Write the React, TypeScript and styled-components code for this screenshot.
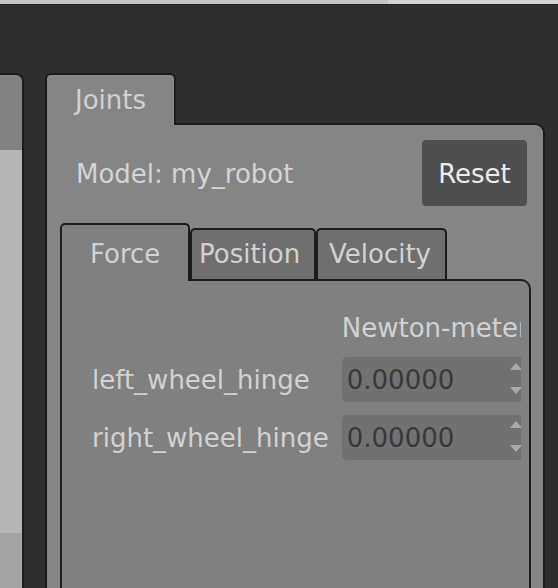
import React from 'react';
import styled, { createGlobalStyle } from 'styled-components';

const Global = createGlobalStyle`
  html, body { margin: 0; padding: 0; background: #2f2f2f; }
  body { width: 558px; height: 588px; overflow: hidden; font-family: "DejaVu Sans", sans-serif; }
  * { box-sizing: border-box; }
`;

const Screen = styled.div`
  width: 558px;
  height: 588px;
  display: flex;
  flex-direction: column;
  overflow: hidden;
  background: #2f2f2f;
`;

const TopStrip = styled.div`
  height: 5px;
  flex-shrink: 0;
  display: flex;
  border-bottom: 1px solid #222;
`;

const StripSeg = styled.div<{ $tone: string; $w?: number }>`
  background: ${(p) => p.$tone};
  ${(p) => (p.$w ? `width: ${p.$w}px;` : 'flex: 1;')}
`;

const Workspace = styled.div`
  flex: 1;
  min-height: 0;
  display: flex;
  gap: 21px;
  padding-top: 68px;
`;

const LeftPane = styled.div`
  width: 24px;
  flex-shrink: 0;
  display: flex;
  flex-direction: column;
  background: #818181;
  border: 2px solid #1c1c1c;
  border-left: none;
  border-bottom: none;
  border-top-right-radius: 8px;
  overflow: hidden;
`;

const LeftHead = styled.div`
  height: 75px;
  flex-shrink: 0;
`;

const LeftCanvas = styled.div`
  flex: 1;
  background: #b5b5b5;
`;

const LeftFooter = styled.div`
  height: 55px;
  flex-shrink: 0;
  background: #a3a3a3;
`;

const JointsPane = styled.div`
  width: 500px;
  flex-shrink: 0;
  display: flex;
  flex-direction: column;
`;

const TabRow = styled.div`
  display: flex;
  align-items: flex-end;
  margin-bottom: -2px;
  position: relative;
  z-index: 1;
`;

const OuterTab = styled.div`
  width: 131px;
  height: 52px;
  padding: 10px 0 0 28px;
  background: #858585;
  border: 2px solid #1c1c1c;
  border-bottom: none;
  border-radius: 6px 6px 0 0;
  color: #d2d2d2;
  font-size: 26px;
  line-height: 30px;
`;

const Panel = styled.div`
  flex: 1;
  min-height: 0;
  display: flex;
  flex-direction: column;
  background: #858585;
  border: 2px solid #1c1c1c;
  border-bottom: none;
  border-top-right-radius: 10px;
  padding: 15px 12px 0 13px;
`;

const Header = styled.div`
  display: flex;
  align-items: center;
  justify-content: space-between;
  padding: 0 4px 0 16px;
`;

const ModelLabel = styled.span`
  color: #d4d4d4;
  font-size: 26px;
  line-height: 30px;
  padding-top: 2px;
`;

const ResetButton = styled.button`
  width: 105px;
  height: 66px;
  border: none;
  border-radius: 4px;
  background: #4f4f4f;
  color: #ececec;
  font-family: "DejaVu Sans", sans-serif;
  font-size: 26px;
  line-height: 30px;
  padding: 2px 0 0;
`;

const SubTabRow = styled.div`
  display: flex;
  align-items: flex-end;
  margin-top: 17px;
  margin-bottom: -2px;
  position: relative;
  z-index: 1;
`;

const SubTab = styled.div<{ $active?: boolean; $w: number; $pad: number }>`
  width: ${(p) => p.$w}px;
  height: ${(p) => (p.$active ? 58 : 51)}px;
  margin-bottom: ${(p) => (p.$active ? 0 : 2)}px;
  padding-top: ${(p) => (p.$active ? 14 : 9)}px;
  padding-left: ${(p) => p.$pad}px;
  background: ${(p) => (p.$active ? '#808080' : '#6f6f6f')};
  border: 2px solid #1c1c1c;
  border-bottom: none;
  border-radius: 5px 5px 0 0;
  color: #d2d2d2;
  font-size: 26px;
  line-height: 30px;
  white-space: nowrap;
`;

const InnerPanel = styled.div`
  flex: 1;
  min-height: 0;
  background: #808080;
  border: 2px solid #1c1c1c;
  border-bottom: none;
  border-top-right-radius: 10px;
  display: flex;
  padding-right: 8px;
`;

const Viewport = styled.div`
  flex: 1;
  overflow: hidden;
  padding: 32px 0 0 30px;
`;

const JointGrid = styled.div`
  display: grid;
  grid-template-columns: auto auto;
  column-gap: 13px;
  row-gap: 13px;
  align-items: center;
  justify-content: start;
`;

const UnitHeader = styled.div`
  grid-column: 2;
  color: #d2d2d2;
  font-size: 26px;
  line-height: 30px;
  margin-bottom: 1px;
  white-space: nowrap;
`;

const JointName = styled.div`
  grid-column: 1;
  color: #d2d2d2;
  font-size: 26px;
  line-height: 30px;
  white-space: nowrap;
`;

const SpinBox = styled.div`
  width: 184px;
  height: 45px;
  display: flex;
  align-items: center;
  justify-content: space-between;
  background: #717171;
  border-radius: 5px;
  padding: 0 4px 0 5px;
`;

const SpinValue = styled.span`
  color: #383838;
  font-size: 26px;
  line-height: 30px;
`;

const SpinArrows = styled.div`
  height: 100%;
  display: flex;
  flex-direction: column;
  justify-content: space-between;
  padding: 6px 0 8px;
`;

const Arrow = styled.div<{ $dir: 'up' | 'down' }>`
  width: 0;
  height: 0;
  border-left: 6px solid transparent;
  border-right: 6px solid transparent;
  ${(p) =>
    p.$dir === 'up'
      ? 'border-bottom: 7px solid #a9a9a9;'
      : 'border-top: 7px solid #a9a9a9;'}
`;

const joints = ['left_wheel_hinge', 'right_wheel_hinge'];
const subTabs = [
  { label: 'Force', w: 130, pad: 28, active: true },
  { label: 'Position', w: 126, pad: 7 },
  { label: 'Velocity', w: 131, pad: 11 },
];

export default function App() {
  return (
    <Screen>
      <Global />
      <TopStrip>
        <StripSeg $tone="#c6c6c6" $w={388} />
        <StripSeg $tone="#d3d3d3" />
      </TopStrip>
      <Workspace>
        <LeftPane>
          <LeftHead />
          <LeftCanvas />
          <LeftFooter />
        </LeftPane>
        <JointsPane>
          <TabRow>
            <OuterTab>Joints</OuterTab>
          </TabRow>
          <Panel>
            <Header>
              <ModelLabel>Model: my_robot</ModelLabel>
              <ResetButton>Reset</ResetButton>
            </Header>
            <SubTabRow>
              {subTabs.map((t) => (
                <SubTab key={t.label} $active={t.active} $w={t.w} $pad={t.pad}>
                  {t.label}
                </SubTab>
              ))}
            </SubTabRow>
            <InnerPanel>
              <Viewport>
                <JointGrid>
                  <UnitHeader>Newton-meter</UnitHeader>
                  {joints.map((j) => (
                    <React.Fragment key={j}>
                      <JointName>{j}</JointName>
                      <SpinBox>
                        <SpinValue>0.00000</SpinValue>
                        <SpinArrows>
                          <Arrow $dir="up" />
                          <Arrow $dir="down" />
                        </SpinArrows>
                      </SpinBox>
                    </React.Fragment>
                  ))}
                </JointGrid>
              </Viewport>
            </InnerPanel>
          </Panel>
        </JointsPane>
      </Workspace>
    </Screen>
  );
}
